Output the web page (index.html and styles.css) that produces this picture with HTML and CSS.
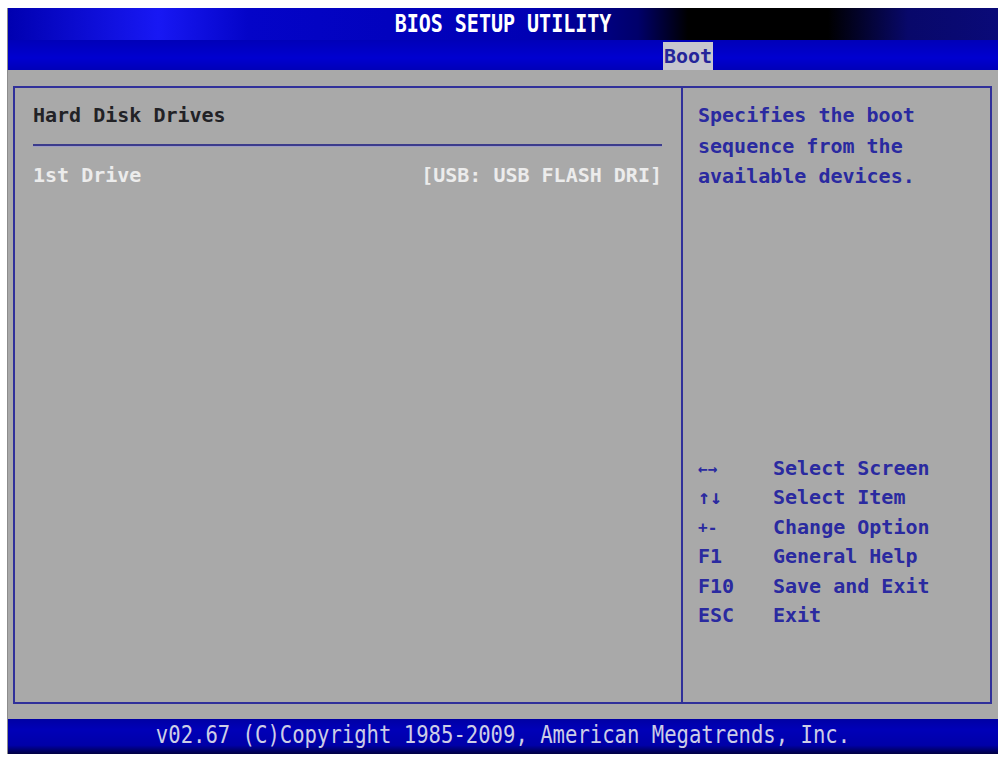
FILE: index.html
```html
<!DOCTYPE html>
<html lang="en">
<head>
    <meta charset="UTF-8">
    <meta name="viewport" content="width=device-width, initial-scale=1.0">
    <title>BIOS Setup Utility</title>
    <link rel="stylesheet" href="styles.css">
</head>
<body>
    <div class="screen">
        <div class="title"><span>BIOS SETUP UTILITY</span></div>
        <div class="tabs">
            <span class="tab active">Boot</span>
        </div>

        <div class="main">
            <div class="panel">
                <section class="settings">
                    <h2>Hard Disk Drives</h2>
                    <div class="rule"></div>
                    <div class="row">
                        <span>1st Drive</span>
                        <span>[USB: USB FLASH DRI]</span>
                    </div>
                </section>

                <aside class="help">
                    <p>Specifies the boot<br>sequence from the<br>available devices.</p>

                    <dl class="keys">
                        <dt class="small">&larr;&rarr;</dt><dd>Select Screen</dd>
                        <dt>&uarr;&darr;</dt><dd>Select Item</dd>
                        <dt class="small">+-</dt><dd>Change Option</dd>
                        <dt>F1</dt><dd>General Help</dd>
                        <dt>F10</dt><dd>Save and Exit</dd>
                        <dt>ESC</dt><dd>Exit</dd>
                    </dl>
                </aside>
            </div>
        </div>

        <div class="footer"><span>v02.67 (C)Copyright 1985-2009, American Megatrends, Inc.</span></div>
    </div>
</body>
</html>
```

FILE: styles.css
```css
body {
    margin: 0;
    background-color: white;
    font-family: "DejaVu Sans Mono", "Liberation Mono", monospace;
    font-size: 20px;
}
.screen {
    width: 991px;
    margin: 8px 0 0 7px;
    border-left: 1px solid #8c8c8c;
    box-sizing: border-box;
}
.title {
    height: 32px;
    line-height: 32px;
    text-align: center;
    color: white;
    font-weight: bold;
    background: linear-gradient(to right, #0000b0 0, #1818f4 150px, #0404c8 240px, #0000b4 520px, #00006a 630px, #000000 680px, #000000 820px, #08086a 900px, #0a0a78 100%);
}
.title span,
.footer span {
    display: inline-block;
    transform: scaleY(1.2);
}
.tabs {
    height: 30px;
    display: flex;
    align-items: flex-end;
    padding-left: 655px;
    background: linear-gradient(to bottom, #0000b8, #0000d0 60%, #0000b8);
}
.tab {
    height: 28px;
    line-height: 28px;
    padding: 0 1px;
    font-weight: bold;
}
.tab.active {
    background-color: #c6c6ce;
    color: #24249a;
}
.main {
    background-color: #a9a9a9;
    padding: 16px 6px 15px 5px;
}
.panel {
    height: 618px;
    box-sizing: border-box;
    border: 2px solid #30309a;
    display: grid;
    grid-template-columns: 668px 1fr;
    font-weight: bold;
}
.settings {
    border-right: 2px solid #30309a;
    padding: 12px 19px 0 18px;
}
.settings h2 {
    margin: 0;
    font-size: 20px;
    line-height: 30px;
    color: #222226;
}
.rule {
    height: 2px;
    margin: 14px 0;
    background-color: #3c3c8c;
    box-shadow: 0 1px 0 #9c9cc4;
}
.row {
    display: flex;
    justify-content: space-between;
    line-height: 30px;
    color: #ececec;
}
.help {
    padding: 12px 10px 0 15px;
    color: #2a2aa0;
}
.help p {
    margin: 0;
    line-height: 30.5px;
}
.keys {
    margin: 262px 0 0;
    display: grid;
    grid-template-columns: 75px 1fr;
    line-height: 29.6px;
}
.keys dt,
.keys dd {
    margin: 0;
}
.keys .small {
    font-size: 16px;
}
.footer {
    height: 35px;
    line-height: 33px;
    text-align: center;
    color: #cdcde6;
    font-size: 20.6px;
    background: linear-gradient(to bottom, #0000a4, #0000b8 30%, #0000a8 75%, #000040);
}
```
